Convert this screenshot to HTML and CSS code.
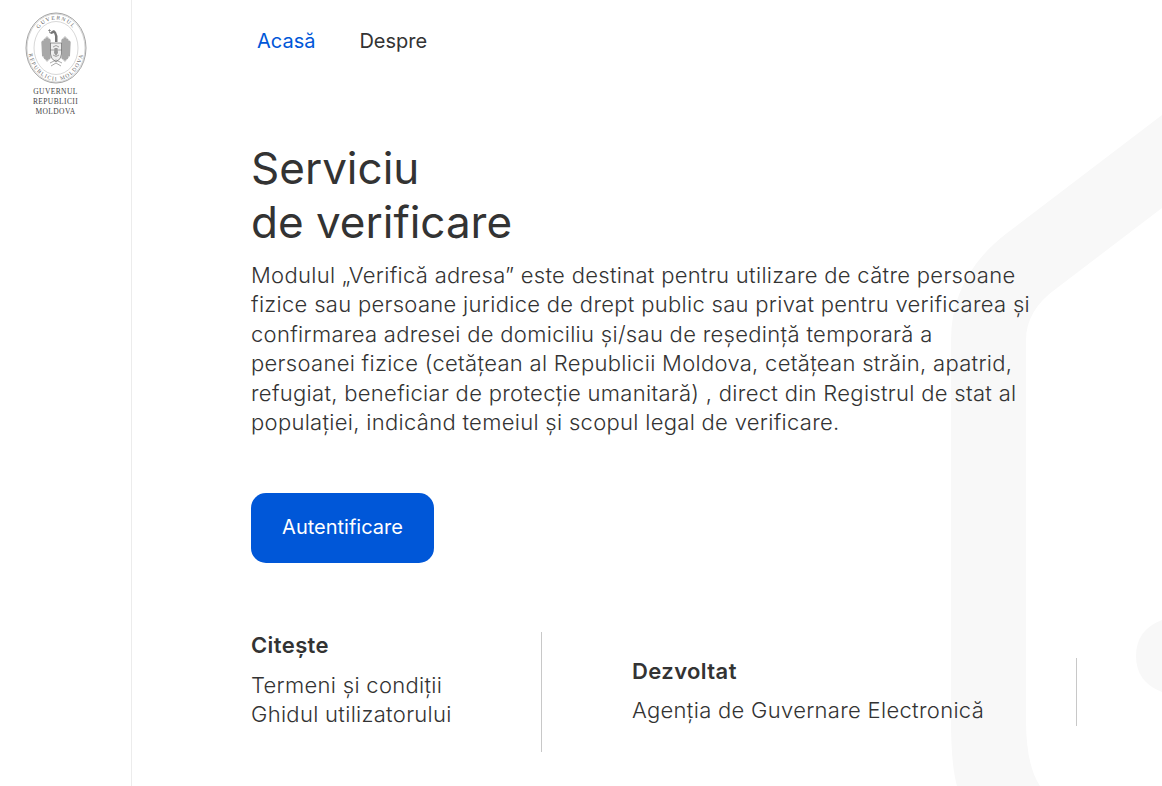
FILE: index.html
```html
<!DOCTYPE html>
<html lang="ro">
<head>
<meta charset="utf-8">
<title>Serviciu de verificare</title>
<link rel="stylesheet" href="styles.css">
</head>
<body>
<svg class="bg-shape" viewBox="0 0 1162 786" aria-hidden="true">
  <path d="M1162 115 L1007 233 Q951 276 951 340 L951 720 Q951 765 957 786 L1040 786 Q1026 765 1026 720 L1026 340 Q1026 310 1057 288 L1162 208 Z"/>
  <path d="M1162 620 Q1136 630 1136 656 Q1136 682 1162 692 Z"/>
</svg>
<aside class="sidebar">
  <svg class="emblem" viewBox="0 0 62 72" aria-hidden="true">
    <defs>
      <path id="seal-top" d="M7.500 36 A23.500 28.500 0 0 1 54.500 36"/>
      <path id="seal-bottom" d="M3.500 36 A27.500 32.500 0 0 0 58.500 36"/>
    </defs>
    <ellipse cx="31" cy="36" rx="30" ry="35" class="ring"/>
    <ellipse cx="31" cy="36" rx="29" ry="34" class="ring thin"/>
    <ellipse cx="31" cy="36" rx="22" ry="26.500" class="ring thin"/>
    <text class="seal"><textPath href="#seal-top" startOffset="50%" text-anchor="middle">GUVERNUL</textPath></text>
    <text class="seal"><textPath href="#seal-bottom" startOffset="50%" text-anchor="middle">REPUBLICII MOLDOVA</textPath></text>
    <path class="wing" d="M16 30 L22 24 L26 28 L26 46 L22 50 L17 44 Z"/>
    <path class="wing" d="M46 30 L40 24 L36 28 L36 46 L40 50 L45 44 Z"/>
    <path class="hatch" d="M18 29 V44 M20 27 V47 M22 26 V48 M24 27 V47 M44 29 V44 M42 27 V47 M40 26 V48 M38 27 V47"/>
    <path class="shield" d="M25.500 31 H36.500 V42 Q36.500 47 31 50 Q25.500 47 25.500 42 Z"/>
    <path class="hatch" d="M25.500 38 H36.500 M28 35 Q31 32 34 35 M28 43 Q31 46 34 43"/>
    <path class="mark" d="M29.500 36 H32.500 L33 41 L31 44 L29 41 Z"/>
    <path class="bird" d="M27 19 L24.500 21 L26.500 22 L29 21 L30 24 L30 30 H32.500 V24 L31 20 L29 18 Z"/>
    <path class="hatch" d="M24.500 21 V17 M23 18.500 H26 M25 51 L31 48 L37 51 M26 54 L31 51 L36 54"/>
  </svg>
  <div class="gov-name">GUVERNUL<br>REPUBLICII<br>MOLDOVA</div>
</aside>
<main class="main">
  <nav class="nav">
    <a class="nav-link active" href="#">Acasă</a>
    <a class="nav-link" href="#">Despre</a>
  </nav>
  <h1 class="title">Serviciu<br>de verificare</h1>
  <p class="lead">Modulul „Verifică adresa” este destinat pentru utilizare de către persoane<br>fizice sau persoane juridice de drept public sau privat pentru verificarea și<br>confirmarea adresei de domiciliu și/sau de reședință temporară a<br>persoanei fizice (cetățean al Republicii Moldova, cetățean străin, apatrid,<br>refugiat, beneficiar de protecție umanitară) , direct din Registrul de stat al<br>populației, indicând temeiul și scopul legal de verificare.</p>
  <a class="btn" href="#">Autentificare</a>
  <footer class="foot">
    <section class="foot-col read">
      <h2>Citește</h2>
      <a href="#">Termeni și condiții</a>
      <a href="#">Ghidul utilizatorului</a>
    </section>
    <section class="foot-col dev">
      <h2>Dezvoltat</h2>
      <a href="#">Agenția de Guvernare Electronică</a>
    </section>
  </footer>
</main>
</body>
</html>
```
FILE: styles.css
```css
* { box-sizing: border-box; }
html, body { height: 100%; }
body {
  margin: 0;
  display: flex;
  min-height: 786px;
  overflow: hidden;
  background: #fff;
  color: #333;
  font-family: Inter, "Noto Sans", sans-serif;
}
a { color: inherit; text-decoration: none; }
.bg-shape {
  position: absolute;
  left: 0; top: 0;
  width: 1162px; height: 786px;
  z-index: -1;
  fill: #f8f8f8;
}
.sidebar {
  width: 132px;
  flex: none;
  border-right: 1px solid #ececec;
  padding: 12px 20px 0 0;
  display: flex;
  flex-direction: column;
  align-items: center;
}
.emblem { width: 62px; height: 72px; }
.ring { fill: none; stroke: #666; stroke-width: .6; }
.ring.thin { stroke: #999; stroke-width: .4; }
.seal {
  font-family: "Liberation Serif", serif;
  font-size: 5.500px;
  letter-spacing: 1.300px;
  fill: #666;
}
.wing { fill: #c4c4c4; }
.hatch { fill: none; stroke: #555; stroke-width: .5; }
.shield { fill: #eee; stroke: #555; stroke-width: .6; }
.mark { fill: #999; }
.bird { fill: #777; }
.gov-name {
  font-family: "Liberation Serif", serif;
  font-size: 7.500px;
  line-height: 10px;
  letter-spacing: .4px;
  text-align: center;
  color: #444;
  margin-top: 3px;
}
.main { padding-left: 119px; flex: 1; }
.nav { display: flex; gap: 44px; padding: 28px 0 0 6px; font-size: 20px; line-height: 26px; font-weight: 400; }
.nav-link.active { color: #0057d8; }
.title { margin: 87px 0 0; font-size: 44px; line-height: 54px; font-weight: 400; }
.lead { margin: 12px 0 0; font-size: 22px; line-height: 29.400px; font-weight: 300; letter-spacing: .3px; white-space: nowrap; }
.btn {
  display: flex; align-items: center; justify-content: center;
  width: 183px; height: 70px; margin-top: 56px; padding-bottom: 2px;
  background: #0057d8; color: #fff; border-radius: 15px;
  font-size: 20px; font-weight: 400;
}
.foot { display: flex; align-items: center; margin-top: 69px; height: 120px; }
.foot-col h2 { margin: 0 0 13px; font-size: 22px; line-height: 26px; font-weight: 600; letter-spacing: .4px; }
.foot-col a { display: block; font-size: 22px; line-height: 29px; font-weight: 300; letter-spacing: .3px; }
.read { width: 291px; height: 120px; border-right: 1px solid #c8c8c8; }
.dev { margin-left: 90px; width: 445px; height: 68px; border-right: 1px solid #c8c8c8; }
.dev a { line-height: 27px; }
```
